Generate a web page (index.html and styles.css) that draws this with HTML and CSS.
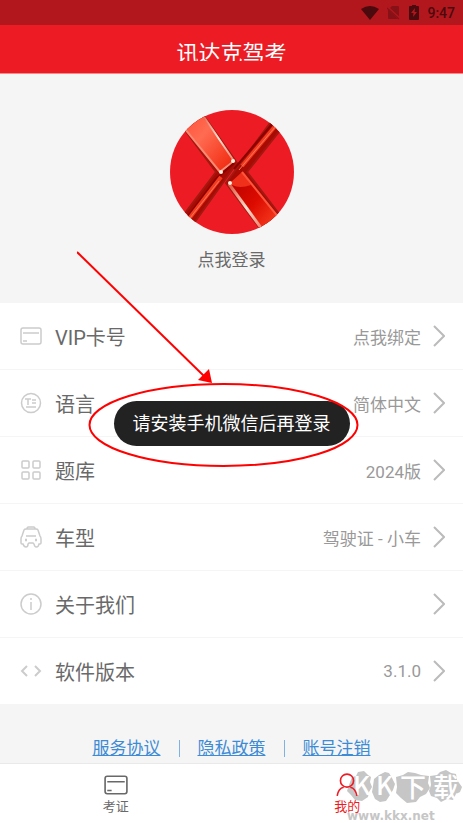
FILE: index.html
```html
<!DOCTYPE html>
<html lang="zh-CN">
<head>
<meta charset="utf-8">
<meta name="viewport" content="width=device-width, initial-scale=1">
<title>讯达克驾考</title>
<link rel="stylesheet" href="styles.css">
</head>
<body>
<div class="status">
  <svg width="18" height="14" viewBox="0 0 18 14"><path d="M0 3Q9-3 18 3L9 14Z" fill="#4b0a0d"/></svg>
  <svg width="14" height="15" viewBox="0 0 14 15"><path d="M5 1h6q1 0 1 1v12H2q-1 0-1-1V5z" fill="#861217"/><path d="M0 2l13 12" stroke="#b2171d" stroke-width="2.500"/><path d="M0 3l12 11" stroke="#861217" stroke-width="1.200"/></svg>
  <svg width="10" height="15" viewBox="0 0 10 15"><path d="M3 0h4v1h2q1 0 1 1v12q0 1-1 1H1q-1 0-1-1V2q0-1 1-1h2z" fill="#4b0a0d"/><path d="M6 3L2 8h2.500l-.5 4 4-5H5.500z" fill="#b2171d"/></svg>
  <span>9:47</span>
</div>
<header class="header"><h1>讯达克驾考</h1></header>

<main class="main">
  <section class="profile">
    <svg class="avatar" viewBox="0 0 124 124" role="img" aria-label="头像">
      <defs>
        <clipPath id="disc"><circle cx="62" cy="62" r="62"/></clipPath>
        <linearGradient id="bright" x1="0" y1="0" x2="1" y2="1"><stop offset="0" stop-color="#ff4a33"/><stop offset=".4" stop-color="#ff6c52"/><stop offset="1" stop-color="#f02208"/></linearGradient>
        <linearGradient id="deep" x1="0" y1="0" x2="1" y2="1"><stop offset="0" stop-color="#b40000"/><stop offset=".5" stop-color="#dc0b00"/><stop offset="1" stop-color="#ff4a28"/></linearGradient>
        <linearGradient id="shine" x1="0" y1="0" x2="1" y2="1"><stop offset="0" stop-color="#e0533c"/><stop offset=".5" stop-color="#ffe0d2"/><stop offset="1" stop-color="#ef7058"/></linearGradient>
      </defs>
      <g clip-path="url(#disc)">
        <path d="M0 0h124v124H0z" fill="#ed1c24"/>
        <g stroke-linejoin="round">
          <path d="M9 12L46 62 12 107l10 9L67 53 29-1z" fill="#a80a04" stroke="#a3180f" stroke-width="2"/>
          <path d="M103 9l9 9L77 62l36 47-18 16L56 73z" fill="#a80a04" stroke="#a3180f" stroke-width="2"/>
        </g>
        <path d="M12 14L50 61l14-10L29 1z" fill="url(#bright)"/>
        <path d="M11 14L50 62" fill="none" stroke="#ff8a72" stroke-width="2"/>
        <path d="M30 1l34 50-13 10" fill="none" stroke="url(#shine)" stroke-width="2"/>
        <path d="M64 53L46 69 16 109" fill="none" stroke="#8b0200" stroke-width="2"/>
        <path d="M51 67L18 110" stroke="#f23c22" stroke-width="4"/>
        <path d="M49 71L20 108" stroke="#ff7457" stroke-width="1"/>
        <path d="M107 14L72 56" stroke="#f23c22" stroke-width="4"/>
        <path d="M106 16L69 60" stroke="#ff7457" stroke-width="1"/>
        <path d="M103 13L64 59" stroke="#8b0200" stroke-width="2"/>
        <path d="M60 73l12-11 37 45-14 16z" fill="url(#deep)"/>
        <path d="M60 73l12-11 9 13q-11 4-19 0z" fill="#f0301a"/>
        <path d="M72 62l37 46" stroke="#ff553c" stroke-width="2"/>
        <path d="M59 74l35 48" stroke="url(#shine)" stroke-width="3"/>
        <g fill="#fff0df"><circle cx="63" cy="51" r="2"/><circle cx="51" cy="62" r="2"/><circle cx="60" cy="73" r="2"/></g>
      </g>
    </svg>
    <a class="login" href="#login">点我登录</a>
  </section>

  <nav class="list" aria-label="设置">
    <a class="row" href="#vip">
      <svg class="icon" viewBox="0 0 22 22"><rect x="1" y="3" width="20" height="16" rx="2"/><path d="M3 8h16M3 16h4"/></svg>
      <span class="label">VIP卡号</span><span class="value">点我绑定</span>
      <svg class="chevron" viewBox="0 0 12 22"><path d="M1 1l10 10L1 21"/></svg>
    </a>
    <a class="row" href="#language">
      <svg class="icon" viewBox="0 0 22 22"><circle cx="11" cy="11" r="9.500"/><path d="M5 7h6M8 7v6M12 8h4M12 11h4M6 15h10"/></svg>
      <span class="label">语言</span><span class="value">简体中文</span>
      <svg class="chevron" viewBox="0 0 12 22"><path d="M1 1l10 10L1 21"/></svg>
    </a>
    <a class="row" href="#bank">
      <svg class="icon" viewBox="0 0 22 22"><rect x="2" y="2" width="7" height="7" rx="1"/><rect x="13" y="2" width="7" height="7" rx="1"/><rect x="2" y="13" width="7" height="7" rx="1"/><rect x="13" y="13" width="7" height="7" rx="1"/></svg>
      <span class="label">题库</span><span class="value">2024版</span>
      <svg class="chevron" viewBox="0 0 12 22"><path d="M1 1l10 10L1 21"/></svg>
    </a>
    <a class="row" href="#vehicle">
      <svg class="icon" viewBox="0 0 22 22"><path d="M7 3q0-2 1.500-2h5Q15 1 15 3M2 10l2-6q.5-1 2-1h10q1.500 0 2 1l2 6q1 1 1 3v4q0 1-1 1h-1q-.5 3-2.500 3T14 18l-1-1H9l-1 1q0 3-2 3t-3-3H2q-1 0-1-1v-4q0-2 1-3zM6 10h10"/><path d="M5 14h2M15 14h2" stroke-width="2.500"/></svg>
      <span class="label">车型</span><span class="value">驾驶证 - 小车</span>
      <svg class="chevron" viewBox="0 0 12 22"><path d="M1 1l10 10L1 21"/></svg>
    </a>
    <a class="row" href="#about">
      <svg class="icon" viewBox="0 0 22 22"><circle cx="11" cy="11" r="10"/><path d="M11 9v8M11 5v2"/></svg>
      <span class="label">关于我们</span>
      <svg class="chevron" viewBox="0 0 12 22"><path d="M1 1l10 10L1 21"/></svg>
    </a>
    <a class="row" href="#version">
      <svg class="icon" viewBox="0 0 22 22"><path d="M7 6l-5 5 5 5M15 6l5 5-5 5" stroke-width="2"/></svg>
      <span class="label">软件版本</span><span class="value">3.1.0</span>
      <svg class="chevron" viewBox="0 0 12 22"><path d="M1 1l10 10L1 21"/></svg>
    </a>
  </nav>

  <div class="legal">
    <a href="#terms">服务协议</a><i></i><a href="#privacy">隐私政策</a><i></i><a href="#cancel">账号注销</a>
  </div>
</main>

<nav class="tabs" aria-label="主导航">
  <div class="watermark">
    <svg width="116" height="40" viewBox="0 0 116 40" fill="#c6c6c6">
      <path d="M5 9l4-1 2-4 6-1 4 4 3 2-1 5 2 5-3 5-1 5-6 4-7-1-4-5-4-4 2-6z"/>
      <path d="M27 11l5-4 6-3 4 1 3 5 3 6-2 6-3 5-4 6-6 1-5-3-3-7 1-6z"/>
      <path d="M49 9l7-2 5-3 7 1 6 2 8 1-1 7 2 5-4 6-6 3-4 5-9 1-6-5-5-5 1-6z"/>
      <path d="M83 8l7-1 3-3 6-2 5 3 5 1 1 6 5 7-2 5-4 2-3 6-6-1-6 3-4-4-6-2-2-5 2-6z"/>
      <g class="mark"><text x="6" y="27">K</text><text x="29" y="27">K</text><text x="53" y="29">下</text><text x="86" y="29">载</text></g>
    </svg>
    <span>www.kkx.net</span>
  </div>
  <a class="tab" href="#exam">
    <svg viewBox="0 0 22 22"><rect x="1" y="3" width="20" height="16" rx="2"/><path d="M3 8h16M3 16h4"/></svg>
    <span>考证</span>
  </a>
  <a class="tab active" href="#me" aria-current="page">
    <svg viewBox="0 0 22 22"><circle cx="11" cy="7" r="6"/><path d="M2 21q1-7 6-8M14 13q5 1 6 8"/></svg>
    <span>我的</span>
  </a>
</nav>

<div class="toast" role="status">请安装手机微信后再登录</div>
<svg class="callout" viewBox="0 0 290 218" width="290" height="218">
  <path d="M0 1L128 126" stroke="#f00" stroke-width="2"/><path d="M135 132l-14-3 11-11z" fill="#f00"/>
  <ellipse cx="146.500" cy="174" rx="134" ry="41" fill="none" stroke="#f00" stroke-width="2"/>
</svg>
</body>
</html>
```
FILE: styles.css
```css
* { box-sizing: border-box; }

body {
  margin: 0;
  min-height: 100vh;
  display: flex;
  flex-direction: column;
  position: relative;
  background: #f5f5f5;
  color: #696969;
  font-family: Roboto, "Noto Sans CJK SC", sans-serif;
}

a { color: inherit; text-decoration: none; }

.status {
  height: 25px;
  padding: 0 8px;
  display: flex;
  align-items: center;
  justify-content: flex-end;
  gap: 8px;
  background: #b2171d;
  color: #4b0a0d;
  font-size: 14px;
  font-weight: 500;
}

.status svg { flex: none; }

.header {
  height: 49px;
  padding-top: 12px;
  background: #ed1c24;
  border-bottom: 1px solid #f58a8e;
  color: #fff;
  text-align: center;
}

.header h1 {
  height: 24px;
  margin: 0;
  overflow: hidden;
  font-size: 22px;
  line-height: 34px;
  font-weight: 400;
}

.main { flex: 1; }

.profile {
  padding: 36px 0 31px;
  display: flex;
  flex-direction: column;
  align-items: center;
  gap: 14px;
}

.avatar { width: 124px; height: 124px; }

.login { font-size: 17px; line-height: 24px; }

.list { background: #fff; }

.row {
  height: 67px;
  padding: 0 18px 0 20px;
  display: flex;
  align-items: center;
  border-bottom: 1px solid #f5f5f5;
}

.icon {
  width: 22px;
  height: 22px;
  margin-right: 13px;
  fill: none;
  stroke: #ccc;
  stroke-width: 1.5;
}

.label { flex: 1; font-size: 20px; }

.value { color: #999; font-size: 17px; }

.chevron {
  width: 12px;
  height: 22px;
  margin-left: 12px;
  fill: none;
  stroke: #bbb;
  stroke-width: 2;
}

.legal {
  padding: 31px 0 0;
  display: flex;
  align-items: center;
  justify-content: center;
  gap: 18px;
  color: #3d8bd4;
  font-size: 17px;
  line-height: 24px;
}

.legal a { text-decoration: underline; }

.legal i { width: 1px; height: 17px; background: #7eb2e3; }

.tabs {
  height: 60px;
  display: flex;
  position: relative;
  background: #fff;
  border-top: 1px solid #e9e9e9;
}

.tab {
  flex: 1;
  padding-top: 9px;
  display: flex;
  flex-direction: column;
  align-items: center;
  position: relative;
  font-size: 13px;
  line-height: 20px;
}

.tab svg {
  width: 24px;
  height: 24px;
  fill: none;
  stroke: currentColor;
  stroke-width: 1.5;
}

.active { color: #ed1c24; }

.watermark {
  position: absolute;
  right: 0;
  top: 4px;
  width: 116px;
  color: #c6c6c6;
  font: bold 12px/16px "DejaVu Sans", sans-serif;
}

.watermark svg { display: block; overflow: visible; }

.mark {
  fill: #fff;
  font: 500 26px "Noto Sans CJK SC", sans-serif;
}

.toast {
  position: absolute;
  left: 50%;
  top: 401px;
  transform: translateX(-50%);
  padding: 0 19px;
  border-radius: 23px;
  background: #222;
  color: #fff;
  font-size: 18px;
  line-height: 45px;
  white-space: nowrap;
}

.callout {
  position: absolute;
  left: 77px;
  top: 251px;
  pointer-events: none;
}
```
